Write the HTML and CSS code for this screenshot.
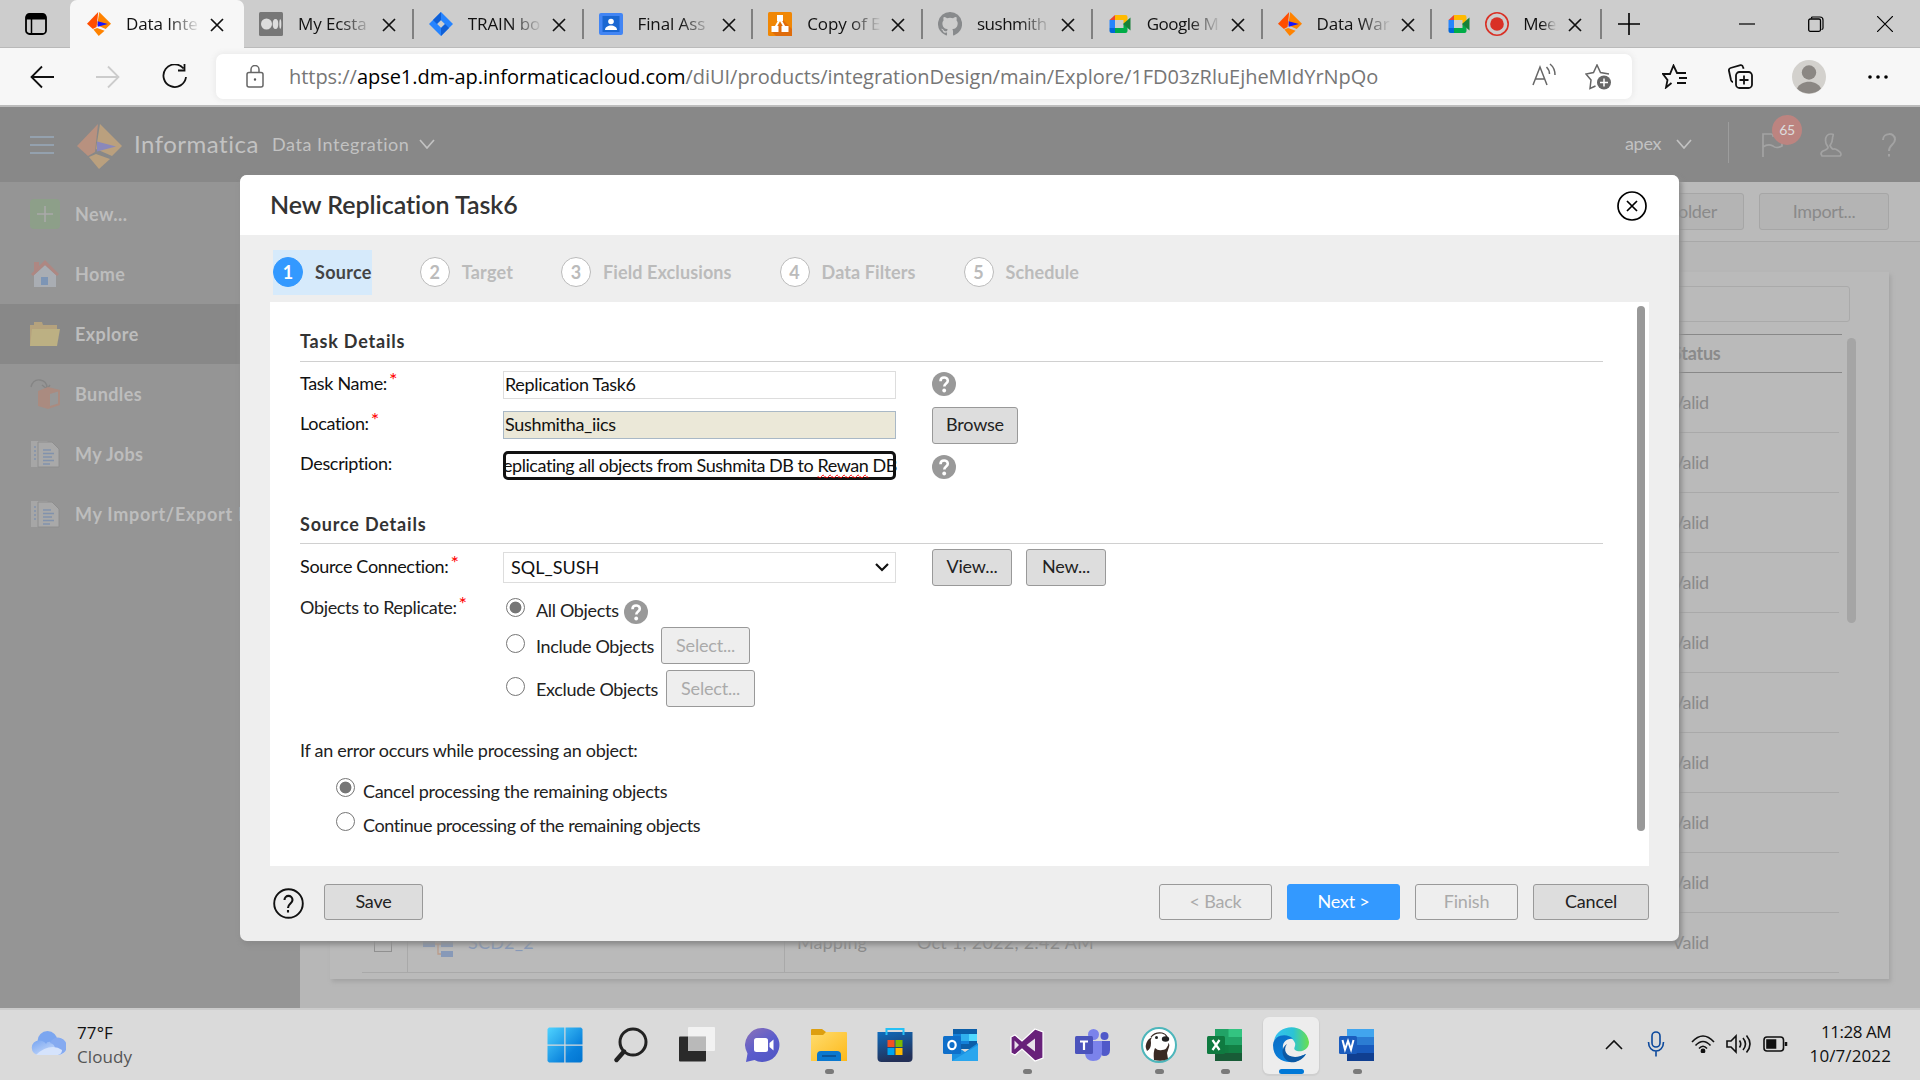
FILE: index.html
```html
<!DOCTYPE html>
<html lang="en">
<head>
<meta charset="utf-8">
<title>Data Integration</title>
<link rel="stylesheet" href="styles.css">
</head>
<body>
<svg class="defs" aria-hidden="true">
  <symbol id="x" viewBox="0 0 14 14"><path d="M1 1l12 12M13 1L1 13" fill="none" stroke="currentColor" stroke-width="1.7"/></symbol>
  <symbol id="infa" viewBox="0 0 45 45"><path fill="var(--c1,#ff4d00)" d="M21 0L0 22l11 10 7-4z"/><path fill="var(--c2,#ff8300)" d="M23 0l22 22-10 10-16-7z"/><path fill="var(--c2,#ff8300)" d="M12 33l7-3 14 5-11 10z"/><path fill="var(--c3,#1414ff)" d="M20 17.500l19 5-19 5z"/></symbol>
  <symbol id="meet" viewBox="0 0 24 24"><path fill="#ffba00" d="M7 3h10.500a2 2 0 0 1 2 2v4l-4 3V8H7z"/><path fill="#ea4335" d="M7 3v5H1.500z"/><path fill="#2684fc" d="M1.500 8H7v8H1.500z"/><path fill="#0066da" d="M1.500 16H7v5H3.500a2 2 0 0 1-2-2z"/><path fill="#00ac47" d="M7 16h8.500v-4l4 3v4a2 2 0 0 1-2 2H7z"/><path fill="#188038" d="M15 12l7.500-6.500v13z"/></symbol>
  <symbol id="q" viewBox="0 0 24 24"><circle cx="12" cy="12" r="12" fill="#999"/><path d="M8.500 9.200c0-5 7.300-4.700 7.300-.4 0 2.800-3.500 2.700-3.500 5.700" fill="none" stroke="#fff" stroke-width="2.600"/><circle cx="12.200" cy="18.500" r="1.900" fill="#fff"/></symbol>
  <symbol id="docs" viewBox="0 0 30 30"><path d="M1 2h16l2 2H9v24H1z" fill="#a6a6a6"/><path d="M8 3h14l7 7v18H8z" fill="#a9a9a9" stroke="#8e8e8e"/><path d="M13 11h8M13 14.500h11M13 18h9M13 21.500h11M13 25h7M4 8h2M4 12h2M4 16h2M4 20h2" stroke="#8192ad" stroke-width="1.700"/></symbol>
</svg>

<header class="tabstrip">
  <svg class="tabmenu" viewBox="0 0 22 22"><rect x="1" y="1" width="20" height="20" rx="3.500" fill="none" stroke="#000" stroke-width="1.800"/><path d="M1 3q0-2 3-2h14q3 0 3 2v3.500H1z"/><path d="M6.500 6v15" stroke="#000" stroke-width="1.500"/></svg>
  <div class="tab active"><svg class="fav"><use href="#infa"/></svg><span>Data Inte</span><svg class="close"><use href="#x"/></svg></div>
  <div class="tab"><svg class="fav" viewBox="0 0 24 24"><rect width="24" height="24" rx="1.500" fill="#777"/><circle cx="7.500" cy="12" r="5.500" fill="#ddd"/><ellipse cx="16.500" cy="12" rx="2.800" ry="5" fill="#ddd"/><ellipse cx="21.300" cy="12" rx="1" ry="4.800" fill="#ddd"/></svg><span>My Ecsta</span><svg class="close"><use href="#x"/></svg></div>
  <div class="tab"><svg class="fav" viewBox="0 0 24 24"><path fill="#2684ff" d="M12 0l12 12-12 12L0 12z"/><path fill="#0f5fd6" d="M12 0v8l-4 4-4-4zM12 24v-8l4-4 4 4z"/><path fill="#cdcdcd" d="M12 8.200l3.800 3.800-3.800 3.800L8.200 12z"/></svg><span>TRAIN bo</span><svg class="close"><use href="#x"/></svg></div>
  <div class="tab"><svg class="fav" viewBox="0 0 24 24"><rect y="1" width="24" height="22" rx="2" fill="#4285f4"/><rect x="3.500" y="4" width="17" height="16" fill="#1a67d2"/><circle cx="12" cy="9.500" r="2.800" fill="#fff"/><path d="M6 18c0-6 12-6 12 0z" fill="#fff"/></svg><span>Final Ass</span><svg class="close"><use href="#x"/></svg></div>
  <div class="tab"><svg class="fav" viewBox="0 0 24 24"><rect width="24" height="24" rx="1.500" fill="#f08705"/><path d="M15 8l9 9v7H8l-4-4z" fill="#df6c0c"/><path d="M12 7L7 16M12 7l5 9" stroke="#fff" stroke-width="2"/><path d="M9 3h6v6H9zM3.500 14h7v6h-7zM13.500 14h7v6h-7z" fill="#fff"/></svg><span>Copy of E</span><svg class="close"><use href="#x"/></svg></div>
  <div class="tab"><svg class="fav" viewBox="0 0 16 16"><path fill="#888a8c" d="M8 0a8 8 0 0 0-2.530 15.590c.4.070.55-.17.55-.38v-1.490c-2.010.37-2.530-.49-2.690-.94-.09-.23-.48-.94-.82-1.130-.28-.15-.68-.52-.01-.53.63-.01 1.080.58 1.230.82.720 1.210 1.870.87 2.330.66.070-.52.280-.87.510-1.070-1.780-.2-3.640-.89-3.640-3.950 0-.87.310-1.590.82-2.150-.08-.2-.36-1.020.08-2.120 0 0 .67-.21 2.200.82a7.400 7.400 0 0 1 4 0c1.530-1.040 2.200-.82 2.200-.82.440 1.100.160 1.920.080 2.120.510.560.820 1.270.820 2.150 0 3.070-1.870 3.750-3.650 3.950.290.250.540.730.540 1.480v2.200c0 .210.150.460.550.380A8 8 0 0 0 8 0z"/></svg><span class="tight">sushmith</span><svg class="close"><use href="#x"/></svg></div>
  <div class="tab"><svg class="fav"><use href="#meet"/></svg><span class="tight">Google M</span><svg class="close"><use href="#x"/></svg></div>
  <div class="tab"><svg class="fav"><use href="#infa"/></svg><span>Data War</span><svg class="close"><use href="#x"/></svg></div>
  <div class="tab rec"><svg class="fav"><use href="#meet"/></svg><svg class="fav" viewBox="0 0 24 24"><circle cx="12" cy="12" r="11.200" fill="none" stroke="#d93025" stroke-width="1.600"/><circle cx="12" cy="12" r="6.800" fill="#d93025"/></svg><span class="tight">Mee</span><svg class="close"><use href="#x"/></svg></div>
  <svg class="newtab" viewBox="0 0 22 22"><path d="M11 0v22M0 11h22" stroke="#000" stroke-width="1.600"/></svg>
  <div class="winctl">
    <svg viewBox="0 0 16 16"><path d="M0 8h16" stroke="#000" stroke-width="1.200"/></svg>
    <svg viewBox="0 0 16 16"><path d="M3.500 2.500V2q0-1 1-1H12q3 0 3 3v8q0 1.500-1.500 1.500" fill="none" stroke="#000" stroke-width="1.200"/><rect x=".7" y="3" width="11.800" height="12.300" rx="1.500" fill="none" stroke="#000" stroke-width="1.300"/></svg>
    <svg viewBox="0 0 16 16"><path d="M0 0l16 16M16 0L0 16" stroke="#000" stroke-width="1.200"/></svg>
  </div>
</header>

<div class="toolbar">
  <svg class="nav" viewBox="0 0 24 24"><path d="M24 12H1M12 1.500L1.500 12 12 22.500"/></svg>
  <svg class="nav off" viewBox="0 0 24 24"><path d="M0 12h23M12 1.500L22.500 12 12 22.500"/></svg>
  <svg class="nav reload" viewBox="0 0 26 26"><path d="M21.500 4.500A11.300 11.300 0 1 0 24 13M22.500 0v6.500H16"/></svg>
  <div class="address">
    <svg class="lock" viewBox="0 0 18 23"><rect x="1" y="7.500" width="16" height="14.500" rx="2" /><path d="M5 7V4.500a4 4 0 0 1 8 0V7"/><circle cx="9" cy="14.500" r="1.200" fill="#555"/></svg>
    <span class="url">https://<b>apse1.dm-ap.informaticacloud.com</b>/diUI/products/integrationDesign/main/Explore/1FD03zRluEjheMIdYrNpQo</span>
    <svg class="read" viewBox="0 0 24 24"><path d="M1 22L8 4l7 18M3.500 16h9M14.500 4q3 3 3 7M18 1q5 4 5 11"/></svg>
    <svg class="star" viewBox="0 0 26 26"><path d="M10.500 22L5 24.500 6 16 1 10l7.500-1.500L12 1l3.500 7.500L24 10"/><circle cx="19" cy="18.500" r="7" fill="#666" stroke="none"/><path d="M15 18.500h8M19 14.500v8" stroke="#fff"/></svg>
  </div>
  <svg class="nav favs" viewBox="0 0 25 25"><path d="M9.500 19L4 23.500 5.500 16 1 10h7l3.500-8.500L15 9h9M17 14h8M15 19h9"/></svg>
  <svg class="nav coll" viewBox="0 0 25 25"><rect x="8" y="8" width="16" height="16" rx="3.500"/><path d="M16 11.500v9M11.500 16h9M5 18q-1.500 0-2-2L.9 6.500Q.7 4.500 2.500 4l10-2.800Q14.500.8 15 3l.6 1.800"/></svg>
  <svg class="avatar" viewBox="0 0 34 34"><circle cx="17" cy="17" r="17" fill="#d3d1cd"/><circle cx="17" cy="12.500" r="7.200" fill="#8b8783"/><path d="M5 28.500C9 19.500 25 19.500 29 28.500 23 35 11 35 5 28.500z"/></svg>
  <svg class="dots" viewBox="0 0 20 4"><circle cx="2" cy="2" r="1.800"/><circle cx="10" cy="2" r="1.800"/><circle cx="18" cy="2" r="1.800"/></svg>
</div>

<div class="app">
  <div class="apphead">
    <svg class="burger" viewBox="0 0 24 18"><path d="M0 1h24M0 9h24M0 17h24" stroke="#98a9ba" stroke-width="1.700"/></svg>
    <svg class="logo"><use href="#infa"/></svg>
    <span class="brand">Informatica</span>
    <span class="product">Data Integration</span>
    <svg class="chev" viewBox="0 0 16 10"><path d="M1 1l7 8 7-8"/></svg>
    <span class="org">apex</span>
    <svg class="chev" viewBox="0 0 16 10"><path d="M1 1l7 8 7-8"/></svg>
    <i class="sep"></i>
    <div class="flag"><svg viewBox="0 0 22 24"><path d="M1 24V1h8q2 0 2 2h9v10q-6 3-9 0-5-2.500-10 1"/></svg><span>65</span></div>
    <svg class="person" viewBox="0 0 22 24"><path d="M11 1c-4 0-5.500 3-5.500 6.500S7 12.500 8 14c.5 2-1.500 2.500-4 3.500S1 20 1 21t1 2h18q1-.5 1-2t-3-3.500-4.500-1.500-3.500-3.500c1-1.500 2.500-3.500 2.500-7S15 1 11 1z"/></svg>
    <svg class="ask" viewBox="0 0 14 24"><path d="M1 7C1-.5 13-1 13 6.500 13 12 7 11 7 18M7 21v2.500"/></svg>
  </div>
  <nav class="side">
    <a><svg viewBox="0 0 30 30"><rect width="30" height="30" rx="4" fill="#8d9f89"/><path d="M15 7v16M7 15h16" stroke="#a9a9a9" stroke-width="1.600"/></svg>New...</a>
    <a><svg viewBox="0 0 30 30"><path d="M4 16L15 6l11 10v12H4z" fill="#a9adb3"/><path d="M15 1L1 15l2 2L15 6l12 11 2-2z" fill="#ae8782"/><path d="M4 3h5v6l-5 4z" fill="#ae8782"/><path d="M11 18h7v8h-7z" fill="#7d95b5"/></svg>Home</a>
    <a class="on"><svg viewBox="0 0 30 30"><path d="M0 6h4V3h8l1 3h14v21H0z" fill="#b5a27d"/><path d="M2 10h28l-3 17H0z" fill="#bcb083"/></svg>Explore</a>
    <a><svg viewBox="0 0 30 30"><path d="M1 8Q3 0 10 1t7 8M12 6l5 4 3-4" fill="none" stroke="#858585" stroke-width="1.400"/><path d="M8 12l10-4 12 3v15l-12 4-10-3z" fill="#aa8b80"/><path d="M20 15l8-2.500v12L20 27z" fill="#989898"/></svg>Bundles</a>
    <a><svg><use href="#docs"/></svg>My Jobs</a>
    <a class="wide"><svg><use href="#docs"/></svg>My Import/Export Logs</a>
  </nav>
  <main class="content">
    <div class="actions"><button class="nf">New Folder</button><button>Import...</button></div>
    <section class="card">
      <div class="find"></div>
      <div class="table">
        <div class="tr th"><span></span><span></span><span></span><span></span><span>Status</span></div>
        <div class="tr"><span></span><span></span><span></span><span></span><span>Valid</span></div>
        <div class="tr"><span></span><span></span><span></span><span></span><span>Valid</span></div>
        <div class="tr"><span></span><span></span><span></span><span></span><span>Valid</span></div>
        <div class="tr"><span></span><span></span><span></span><span></span><span>Valid</span></div>
        <div class="tr"><span></span><span></span><span></span><span></span><span>Valid</span></div>
        <div class="tr"><span></span><span></span><span></span><span></span><span>Valid</span></div>
        <div class="tr"><span></span><span></span><span></span><span></span><span>Valid</span></div>
        <div class="tr"><span></span><span></span><span></span><span></span><span>Valid</span></div>
        <div class="tr"><span></span><span></span><span></span><span></span><span>Valid</span></div>
        <div class="tr"><span class="ck"><i></i></span><span class="nm"><svg viewBox="0 0 30 26"><path d="M0 10h12v6H0zM18 10h12v6H18zM18 20h12v6H18z" fill="#8799b8"/><path d="M15 13v10h3M12 13h6" fill="none" stroke="#bb9c8a" stroke-width="1.300"/></svg>SCD2_2</span><span class="ty">Mapping</span><span class="dt">Oct 1, 2022, 2:42 AM</span><span>Valid</span></div>
      </div>
      <i class="thumb"></i>
    </section>
  </main>

  <div class="modal">
    <div class="mhead"><h1>New Replication Task6</h1><svg viewBox="0 0 30 30"><circle cx="15" cy="15" r="14" fill="none" stroke="#000" stroke-width="1.700"/><path d="M10 10l10 10M20 10L10 20" stroke="#000" stroke-width="1.700"/></svg></div>
    <div class="steps">
      <div class="step cur"><i>1</i>Source</div>
      <div class="step"><i>2</i>Target</div>
      <div class="step"><i>3</i>Field Exclusions</div>
      <div class="step"><i>4</i>Data Filters</div>
      <div class="step"><i>5</i>Schedule</div>
    </div>
    <div class="panel">
      <div class="form">
        <h2>Task Details</h2>
        <div class="row first"><label>Task Name:<sup>*</sup></label><div class="in">Replication Task6</div><svg class="help"><use href="#q"/></svg></div>
        <div class="row"><label>Location:<sup>*</sup></label><div class="in ro">Sushmitha_iics</div><button>Browse</button></div>
        <div class="row"><label>Description:</label><div class="in focus"><span>eplicating all objects from Sushmita DB to <u>Rewan</u> DB</span></div><svg class="help low"><use href="#q"/></svg></div>
        <h2>Source Details</h2>
        <div class="row conn"><label>Source Connection:<sup>*</sup></label><div class="sel">SQL_SUSH<svg viewBox="0 0 14 9"><path d="M1 1l6 6 6-6" fill="none" stroke="#111" stroke-width="2.200"/></svg></div><button>View...</button><button class="new">New...</button></div>
        <div class="objects"><label>Objects to Replicate:<sup>*</sup></label>
          <div class="opts">
            <div class="opt a"><i class="radio sel1"></i>All Objects<svg class="help"><use href="#q"/></svg></div>
            <div class="opt"><i class="radio"></i>Include Objects<button class="dis">Select...</button></div>
            <div class="opt b"><i class="radio"></i>Exclude Objects<button class="dis">Select...</button></div>
          </div>
        </div>
        <p>If an error occurs while processing an object:</p>
        <div class="err"><i class="radio sel1"></i>Cancel processing the remaining objects</div>
        <div class="err e2"><i class="radio"></i>Continue processing of the remaining objects</div>
      </div>
      <i class="scroll"></i>
    </div>
    <div class="foot">
      <svg viewBox="0 0 31 31"><circle cx="15.500" cy="15.500" r="14.300" fill="none" stroke="#111" stroke-width="1.900"/><path d="M11.500 12c0-5.500 8-5.500 8 0 0 3.500-4.500 3.500-4.500 8M15 22v2.500" fill="none" stroke="#111" stroke-width="2.100"/></svg>
      <button class="save">Save</button>
      <button class="ghost back">&lt; Back</button>
      <button class="next">Next &gt;</button>
      <button class="ghost fin">Finish</button>
      <button class="can">Cancel</button>
    </div>
  </div>
</div>

<footer class="taskbar">
  <div class="weather">
    <svg viewBox="0 0 36 24"><defs><linearGradient id="cl" x2="1" y2="1"><stop stop-color="#6f9ff0"/><stop offset="1" stop-color="#e3edfd"/></linearGradient></defs><circle cx="17.500" cy="10" r="10" fill="#7ba6f0"/><path d="M9 9.500a7.200 7.200 0 0 0 0 14.500h19a8.500 8.500 0 1 0-7-13q-4-1-5 2-2-3.500-7-3.500z" fill="url(#cl)"/><path d="M28 24a8.700 8.700 0 1 0-8-12q5 1 5 6t3 6z" fill="#85aaf0"/><path d="M6 24h22q4-1 4-5-4-3-9-3-9 0-17 8z" fill="#d5e3fc"/></svg>
    <div><span class="t">77°F</span><span class="c">Cloudy</span></div>
  </div>
  <div class="apps">
    <div class="cell"><svg viewBox="0 0 36 36"><defs><linearGradient id="wn" x2="1" y2="1"><stop stop-color="#4fd3ff"/><stop offset=".7" stop-color="#0a82dc"/><stop offset="1" stop-color="#0074d0"/></linearGradient></defs><path fill="url(#wn)" d="M2 .5h15.300v17H.5V2zM18.500.5H34l1.500 1.500v15.500h-17zM.5 18.700h16.800v16.800H2L.5 34zM18.500 18.700h17V34L34 35.500H18.500z"/></svg></div>
    <div class="cell"><svg viewBox="0 0 36 36"><circle cx="20" cy="15" r="13" fill="none" stroke="#222" stroke-width="3"/><path d="M11 24.500L3.500 33" stroke="#222" stroke-width="4.400" stroke-linecap="round"/></svg></div>
    <div class="cell"><svg viewBox="0 0 36 36"><rect x="0" y="9.500" width="27" height="25" rx="1" fill="#2a2a2a"/><rect x="9" y="0" width="27" height="24" rx="1" fill="#f4f4f4" fill-opacity=".9"/><path d="M9 9.500h18V24H9z" fill="#b9b9b9"/></svg></div>
    <div class="cell"><svg viewBox="0 0 36 36"><defs><linearGradient id="ch" x2=".7" y2="1"><stop stop-color="#8d72b8"/><stop offset=".6" stop-color="#5a5ccc"/><stop offset="1" stop-color="#5257c5"/></linearGradient></defs><path d="M18.500 1a17 17 0 1 1-9 32L1 35l1.500-8.500A17 17 0 0 1 18.500 1z" fill="url(#ch)"/><rect x="9" y="11" width="14" height="14" rx="2.500" fill="#fff"/><path d="M24.500 16l4-3.500v11l-4-3.500z" fill="#fff"/></svg></div>
    <div class="cell run"><svg viewBox="0 0 36 36"><defs><linearGradient id="fo" x2="1" y2="1"><stop stop-color="#ffdc6e"/><stop offset="1" stop-color="#fdb91a"/></linearGradient></defs><path d="M0 3q0-1 1-1h10l4 3h20v10H0z" fill="#dd9f10"/><path d="M0 8h12l3-3h20q1 0 1 1v28H0z" fill="url(#fo)"/><path d="M6 34V28q0-4 4-4h16q4 0 4 4v6z" fill="#0a78cf"/><path d="M11 29h14" stroke="#0a4f90" stroke-width="1.600"/></svg></div>
    <div class="cell"><svg viewBox="0 0 36 36"><defs><linearGradient id="st" x2=".3" y2="1"><stop stop-color="#0f6cbd"/><stop offset="1" stop-color="#233057"/></linearGradient></defs><path d="M.5 5h35v26q0 4-4 4h-27q-4 0-4-4z" fill="url(#st)"/><path d="M9.500 8V2h17v6" fill="none" stroke="#25c0f5" stroke-width="2"/><path d="M10.500 13h7v7h-7z" fill="#f25022"/><path d="M18.500 13h7v7h-7z" fill="#7fba00"/><path d="M10.500 21h7v7h-7z" fill="#00a4ef"/><path d="M18.500 21h7v7h-7z" fill="#ffb900"/></svg></div>
    <div class="cell"><svg viewBox="0 0 36 36"><path d="M10 2h24v20H10z" fill="#0c5ea8"/><path d="M10 7h16v10H10z" fill="#1480d8"/><path d="M18 7h8v7h-8z" fill="#30b0ee"/><path d="M26 7h8v7h-8z" fill="#50d9ff"/><path d="M9 16l13 9 13-9v18H9z" fill="#1a90e0"/><path d="M9 34l26-16v16z" fill="#2aa6ee"/><rect y="9" width="18" height="18" rx="1.500" fill="#0f6fca"/><ellipse cx="9" cy="18" rx="3.700" ry="4.200" fill="none" stroke="#fff" stroke-width="2.200"/></svg></div>
    <div class="cell run"><svg viewBox="0 0 36 36"><path d="M26 2l8 3v26l-8 3-13-12-7 6-4-2V10l4-2 7 6z" fill="#68217a" stroke="#fff" stroke-width="1.200"/><path d="M5.500 13.500v9L10 18zM26 11.500v13L17.500 18z" fill="#e8e0ea"/></svg></div>
    <div class="cell"><svg viewBox="0 0 36 36"><circle cx="18.500" cy="7.500" r="5.500" fill="#7b83eb"/><circle cx="29.500" cy="9" r="4" fill="#5059c9"/><path d="M26 14h9v9q0 6-6 6-3 0-3-3z" fill="#5059c9"/><path d="M10 14h17v11q0 9-9 9-7 0-8-7z" fill="#7b83eb"/><rect y="9" width="18" height="18" rx="1.500" fill="#4b53bc"/><path d="M5 14.500h8M9 14.500V23" stroke="#fff" stroke-width="2.200"/></svg></div>
    <div class="cell run"><svg viewBox="0 0 36 36"><circle cx="18" cy="18" r="17" fill="#fff" stroke="#4db6bb" stroke-width="2"/><path d="M7 13q-4 6-1 11 4-2 4-8-1-3 1-6-2 1-4 3z" fill="#382923"/><path d="M10 10q4-5 11-4 4 1 5 4" fill="none" stroke="#382923" stroke-width="1.200"/><ellipse cx="24.500" cy="12" rx="3.700" ry="2.800" fill="#222"/><circle cx="15.500" cy="10.500" r="1.500" fill="#222"/><path d="M13 33q-1-8 1-12 3 3 7 2 4 0 5-3 2-2 1-4 2 1 1 4l-2 6 1 6q-6 3-14 1z" fill="#382923"/></svg></div>
    <div class="cell run"><svg viewBox="0 0 36 36"><path d="M8 2h27v32H8z" fill="#21a366"/><path d="M21.500 2H35v8H21.500z" fill="#33c481"/><path d="M8 18h27v16H8z" fill="#107c41"/><path d="M8 26h27v8H8z" fill="#185c37"/><path d="M21.500 18H35v8H21.500z" fill="#128045"/><rect y="9" width="18" height="18" rx="1.500" fill="#0f7a40"/><path d="M5.500 13l7 10M12.500 13l-7 10" stroke="#fff" stroke-width="2.200"/></svg></div>
    <div class="cell run edge"><svg viewBox="0 0 36 36"><defs><linearGradient id="ea"><stop stop-color="#35c1f1"/><stop offset=".55" stop-color="#2cc3d5"/><stop offset="1" stop-color="#6be04c"/></linearGradient><linearGradient id="eb" x2=".6" y2="1"><stop stop-color="#0b6cc4"/><stop offset="1" stop-color="#0a84e0"/></linearGradient></defs><path d="M1 14C4-4 33-5 36 15c0 9-10 11-14 8-2-2 1-3 0-7C19 8 6 6 1 14z" fill="url(#ea)"/><path d="M0 18C1 7 15 6 20 12c-7-1-11 4-10 10 2 10 12 10 18 7l5-2C26 39 0 39 0 18z" fill="url(#eb)"/><path d="M14 17c-6 8 3 18 19 10-5 8-13 9-16 8C10 33 6 22 14 17z" fill="#0c59a4"/></svg></div>
    <div class="cell run"><svg viewBox="0 0 36 36"><path d="M8 2h27v8H8z" fill="#41a5ee"/><path d="M8 10h27v8H8z" fill="#2b7cd3"/><path d="M8 18h27v8H8z" fill="#185abd"/><path d="M8 26h27v8H8z" fill="#103f91"/><rect y="9" width="18" height="18" rx="1.500" fill="#1a5cbe"/><path d="M3.500 13l2.500 9.500L9 14l3 8.500L14.500 13" fill="none" stroke="#fff" stroke-width="2"/></svg></div>
  </div>
  <div class="tray">
    <svg width="18" height="11" viewBox="0 0 18 11"><path d="M1 10l8-8 8 8"/></svg>
    <svg class="mic" width="18" height="26" viewBox="0 0 18 26"><rect x="5" y="1" width="8" height="15" rx="4"/><path d="M1.500 11c0 12 15 12 15 0M9 20v5.500"/></svg>
    <svg class="wifi" width="24" height="18" viewBox="0 0 24 18"><path d="M1 7q11-12 22 0M4.500 10.500q7.500-8 15 0M8 13.500q4-4.500 8 0"/><circle cx="12" cy="16" r="1.600" fill="#111"/></svg>
    <svg class="vol" width="25" height="20" viewBox="0 0 25 20"><path d="M1 7h4l5-5v16l-5-5H1zM13.500 6.500q2.500 3.500 0 7M17 4q5 6 0 12M20.500 1.500q7 8.500 0 17"/></svg>
    <svg class="bat" width="25" height="16" viewBox="0 0 25 16"><rect x="1" y="1" width="19.500" height="14" rx="3"/><path d="M4 4h8.500v8H4z" fill="#111"/><path d="M23 6v4" stroke-width="2.500"/></svg>
    <div class="clock"><span class="hm">11:28 AM</span><span>10/7/2022</span></div>
  </div>
</footer>
</body>
</html>
```
FILE: styles.css
```css
*{box-sizing:border-box}
body{margin:0;width:1920px;height:1080px;overflow:hidden;display:flex;flex-direction:column;font-family:Lato,"Open Sans",sans-serif;font-size:18px;letter-spacing:-.33px;color:#222}
svg{display:block;flex:none}
i{font-style:normal;display:block;flex:none}
.defs{display:none}

.tabstrip{height:48px;flex:none;display:flex;align-items:center;background:#cdcdcd;border-bottom:1px solid #b9b9b9;font:17px "Open Sans",sans-serif;letter-spacing:-.1px;color:#111}
.tabmenu{width:22px;height:22px;margin:1px 23px 0 25px}
.tab{width:169.750px;height:30px;display:flex;align-items:center;padding-left:15px;border-right:2px solid #808080}
.tab.active{width:174px;height:48px;padding-left:17px;background:#f7f7f7;border:0;border-radius:7px 7px 0 0}
.tab span{width:76px;margin:0 8px 0 15px;white-space:nowrap;-webkit-mask-image:linear-gradient(90deg,#000 55%,transparent 98%);mask-image:linear-gradient(90deg,#000 55%,transparent 98%)}
.tab .fav{width:24px;height:24px}
.tab .tight{letter-spacing:-.5px}
.tab .close{width:14px;height:14px;margin-top:2px}
.tab.rec .fav + .fav{margin-left:14px}
.tab.rec span{width:34px;margin:0 11px 0 14px}
.newtab{width:22px;height:22px;margin-left:16px}
.winctl{display:flex;gap:53px;margin-left:auto;padding-right:27px}
.winctl svg{width:16px;height:16px}

.toolbar{height:59px;flex:none;display:flex;align-items:center;background:#f7f7f7;border-bottom:2px solid #bcbcbc;padding-left:30px}
.toolbar path,.toolbar rect{fill:none;stroke:#111;stroke-width:1.800}
.nav{width:24px;height:24px;margin-right:42px}
.toolbar .off path{stroke:#ccc}
.nav.reload{width:26px;height:26px;margin-right:28px}
.address{width:1416px;height:45px;background:#fff;border-radius:7px;box-shadow:0 0 5px 2px #ececec;display:flex;align-items:center;padding-left:30px;font:20px "Open Sans",sans-serif;letter-spacing:-.04px;color:#767676}
.address path,.address rect{stroke:#666;stroke-width:1.500}
.lock{width:18px;height:23px;margin-right:25px}
.url{width:1241px;white-space:nowrap}
.url b{font-weight:400;color:#000}
.read{width:24px;height:24px;margin:-3px 29px 0 2px}
.star{width:26px;height:26px}
.address .star path:last-child{stroke:#fff}
.nav.favs{margin:0 41px 0 30px;width:25px;height:25px}
.nav.coll{margin:0 39px 0 0;width:25px;height:25px}
.avatar{width:34px;height:34px}
.toolbar .avatar path{fill:#8b8783;stroke:none}
.dots{width:20px;height:4px;margin-left:42px}

.app{height:901px;flex:none;position:relative;display:grid;grid-template:75px 826px / 300px 1fr}
.apphead{grid-column:1/3;background:#888;display:flex;align-items:center;color:#c2c2c2;padding:0 0 2px 30px}
.logo{width:45px;height:45px;margin:5px 12px 0 23px;--c1:#b8917f;--c2:#baa07e;--c3:#8a88bb}
.burger{width:24px;height:18px;margin-top:3px}
.brand{font-size:24px;letter-spacing:.5px;width:138px}
.product{letter-spacing:.55px;width:147px}
.chev{width:16px;height:10px;fill:none;stroke:#c2c2c2;stroke-width:1.700}
.org{margin:-1px 12px 0 1190px;width:39px}
.sep{width:1px;height:41px;background:#9d9d9d;margin:-2px 33px 0 36px}
.flag{position:relative;margin-top:2px}
.flag svg,.person,.ask{fill:none;stroke:#a3a3a3;stroke-width:1.700;width:22px;height:24px}
.flag span{position:absolute;left:10px;top:-18px;width:30px;height:30px;border-radius:50%;background:#bc8480;color:#ddd;font-size:14px;line-height:30px;text-align:center}
.person{margin:2px 0 0 36px}
.ask{width:14px;margin:2px 0 0 40px;stroke-width:2}
.side{background:#959595;padding-top:2px}
.side a{height:60px;display:flex;align-items:center;gap:15px;padding-left:30px;font-weight:700;letter-spacing:.4px;color:#bdbdbd;white-space:nowrap}
.side .wide{letter-spacing:.7px}
.side svg{width:30px;height:30px}
.side .on{background:#888}
.content{background:#b7b7b7;display:flex;flex-direction:column}
.actions{height:60px;flex:none;background:#bababa;border-bottom:1px solid #a8a8a8;display:flex;justify-content:flex-end;gap:15px;padding:11px 31px 0 0}
.actions button{width:130px;height:37px;background:#b4b4b4;border:1px solid #a6a6a6;color:#8a8a8a;letter-spacing:-.35px}
.actions .nf{padding-right:12px}
.card{margin:30px 31px 0 30px;height:707px;background:#bababa;box-shadow:2px 3px 4px #a4a4a4;position:relative;padding:14px 39px 0 32px}
.find{height:36px;border:1px solid #aaa;border-radius:3px}
.table{margin-top:12px;width:1480px;color:#8a8a8a}
.tr{display:grid;grid-template-columns:46px 377px 120px 756px 1fr;height:60px;width:1477px;border-bottom:1px solid #a9a9a9;align-items:center}
.th{height:39px;width:1480px;border-top:1px solid #888;border-bottom:1px solid #888;font-weight:700;letter-spacing:-.25px}
.tr span:last-child{padding:0 0 2px 11px}
.ck{height:60px;border-right:1px solid #a9a9a9;padding:21px 0 0 12px}
.ck i{width:18px;height:18px;border:1.500px solid #909090}
.nm{height:60px;border-right:1px solid #a9a9a9;display:flex;align-items:center;gap:15px;padding:0 0 3px 15px;color:#8799b8;letter-spacing:.2px}
.nm svg{width:30px;height:26px;margin-top:4px}
.ty,.dt{padding:0 0 2px 12px;letter-spacing:.1px}
.dt{letter-spacing:.24px}
.thumb{position:absolute;right:33px;top:66px;width:9px;height:285px;border-radius:5px;background:#a5a5a5}

button{font:18px Lato,"Open Sans",sans-serif;letter-spacing:-.2px;color:#222;background:#ddd;border:1px solid #999;border-radius:3px;padding:0 0 2px;height:37px;flex:none}
.modal{position:absolute;left:240px;top:68px;width:1439px;height:766px;border-radius:7px;background:#eee;box-shadow:2px 3px 5px 1px #8b8b8b;overflow:hidden;display:flex;flex-direction:column}
.mhead{height:60px;flex:none;background:#fff;display:flex;align-items:center;justify-content:space-between;padding:0 32px 0 30px}
.mhead svg{width:30px;height:30px;margin-top:2px}
h1{margin:-2px 0 0;font-size:25px;font-weight:600;letter-spacing:-.05px;color:#333}
.steps{height:67px;flex:none;display:flex;gap:48px;padding:15px 0 0 33px}
.step{height:45px;padding-bottom:2px;display:flex;align-items:center;gap:12px;font-weight:700;letter-spacing:.2px;color:#bbb}
.step:nth-child(n+3){letter-spacing:.1px}
.step i{width:30px;height:30px;border-radius:50%;border:1px solid #bbb;background:#fff;line-height:28px;text-align:center;letter-spacing:0}
.step.cur{background:#d6eafb;color:#444;letter-spacing:.3px}
.step.cur i{background:#3399ff;border-color:#3399ff;color:#fff}
.panel{width:1379px;height:564px;flex:none;margin-left:30px;background:#fff;display:flex;padding:0 4px 0 30px}
.form{width:1303px}
.scroll{width:8px;height:525px;border-radius:4px;background:#999;margin:4px 0 0 auto}
h2{margin:0;height:60px;padding-top:26px;font-size:18px;line-height:26px;font-weight:700;letter-spacing:.8px;color:#333;border-bottom:1px solid #d0d0d0}
.row{height:40px;display:flex;align-items:center;color:#111}
.row.first{margin-top:3px}
label{width:203px;flex:none;line-height:22px;margin-top:-4px}
sup{color:red;font-size:20px;line-height:0;margin-left:2px;vertical-align:3px}
.in,.sel{width:393px;height:28px;border:1px solid #ddd;padding-left:1px;line-height:24px;margin-right:36px;flex:none}
.in.ro{background:#ebe8d8;border-color:#a9b8c6}
.in.focus{border:3px solid #111;border-radius:5px;height:29px;padding:0;line-height:22px}
.in.focus span{display:block;width:393px;margin-left:-3px;letter-spacing:-.45px;white-space:nowrap}
u{text-decoration:underline wavy red 1px;text-underline-offset:2px;text-decoration-skip-ink:none}
.help{width:24px;height:24px;margin-top:-2px}
.help.low{margin-top:3px}
.row button{width:86px}
.form>h2:nth-of-type(2){height:59px}
.conn{height:38px;margin-top:4px}
.sel{height:31px;line-height:29px;padding:0 6px 0 7px;letter-spacing:0;display:flex;align-items:center;justify-content:space-between;margin-top:1px}
.sel svg{width:14px;height:9px}
.row.conn label{margin-top:-3px}
.row.conn button{width:80px}
.row.conn .new{margin-left:14px}
.objects{display:flex}
.objects label{margin-top:10px}
.opts{padding-top:7px}
.opt{height:37px;display:flex;align-items:center;padding-left:3px}
.opt.a{height:34px}
.opt.b{margin-top:6px}
.opt .help{margin:3px 0 0 5px}
.opt button{width:89px;margin-left:7px}
.opt.b button{margin-left:8px}
.radio{width:19px;height:19px;border:1.700px solid #767676;border-radius:50%;background:#fff;margin:0 11px 5px 0}
.sel1{background:radial-gradient(circle,#767676 5.500px,#fff 6.300px)}
.dis{background:#eee;color:#aaa}
p{margin:31px 0 12px;line-height:24px;letter-spacing:-.28px}
.err{height:34px;display:flex;align-items:center;padding-left:36px;letter-spacing:-.3px}
.err .radio{margin:0 8px 8px 0}
.err.e2{letter-spacing:-.42px}
.foot{flex:1;display:flex;align-items:flex-start;padding:18px 30px 0 33px}
.foot svg{width:31px;height:31px;margin:4px 20px 0 0}
.foot button{height:36px}
.save{width:99px}
.foot .back{width:113px;margin-left:auto}
.foot .ghost{background:transparent;color:#aaa}
.foot .next{width:113px;margin:0 15px;background:#3399ff;border-color:#3399ff;color:#fff}
.fin{width:103px}
.can{width:116px;margin-left:15px}

.taskbar{height:72px;flex:none;background:#dadada;border-top:2px solid #cbcbcb;display:flex;align-items:center;font:17px "Open Sans",sans-serif;letter-spacing:0;color:#111}
.weather{width:532px;flex:none;display:flex;align-items:center;gap:11px;padding-left:30px}
.weather svg{width:36px;height:24px;margin-top:-5px}
.weather span,.clock span{display:block;line-height:24px;letter-spacing:.1px}
.weather .c{color:#555}
.apps{display:flex}
.cell{width:66px;height:70px;padding:17px 0 0 15px;position:relative}
.cell svg{width:36px;height:36px}
.run::after{content:"";position:absolute;left:29px;bottom:6px;width:9px;height:5px;border-radius:3px;background:#7a7a7a}
.edge svg{position:relative}
.edge::before{content:"";position:absolute;left:5px;top:7px;width:56px;height:57px;background:#ededed;border-radius:6px;box-shadow:0 1px 1px 1px #cfcfcf}
.edge::after{left:21px;width:25px;background:#0078d7}
.tray{display:flex;align-items:center;margin-left:auto;padding:0 29px 2px 0}
.tray svg{fill:none;stroke:#111;stroke-width:1.600}
.tray .mic{margin:0 26px 0 24px;stroke:#0b489c}
.wifi{margin-right:11px}
.vol{margin-right:12px}
.clock{width:103px;text-align:right}
.clock .hm{letter-spacing:-.48px}
```
